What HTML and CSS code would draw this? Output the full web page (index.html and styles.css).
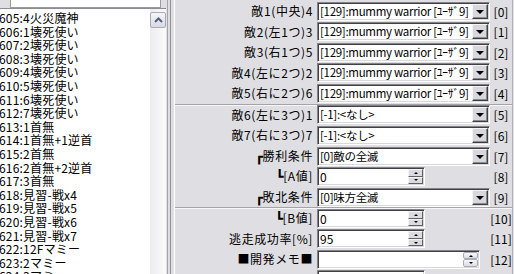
FILE: index.html
```html
<!DOCTYPE html>
<html lang="ja">
<head>
  <meta charset="UTF-8">
  <title>敵グループ編集</title>
  <link rel="stylesheet" href="styles.css">
</head>
<body>
<div class="window">
  <div class="left">
    <div class="search"><div class="search-box"></div></div>
    <div class="listbox">
      <ul class="items">
        <li>605:4火災魔神</li>
        <li>606:1壊死使い</li>
        <li>607:2壊死使い</li>
        <li>608:3壊死使い</li>
        <li>609:4壊死使い</li>
        <li>610:5壊死使い</li>
        <li>611:6壊死使い</li>
        <li>612:7壊死使い</li>
        <li>613:1首無</li>
        <li>614:1首無+1逆首</li>
        <li>615:2首無</li>
        <li>616:2首無+2逆首</li>
        <li>617:3首無</li>
        <li>618:見習-戦x4</li>
        <li>619:見習-戦x5</li>
        <li>620:見習-戦x6</li>
        <li>621:見習-戦x7</li>
        <li>622:12Fマミー</li>
        <li>623:2マミー</li>
        <li>624:3マミー</li>
      </ul>
      <div class="scrollbar">
        <div class="sb-up">
          <svg width="9" height="6" viewBox="0 0 9 6"><polyline points="1,5 4.5,1.5 8,5" fill="none" stroke="#4d6185" stroke-width="2"/></svg>
        </div>
      </div>
    </div>
  </div>

  <div class="splitter"></div>

  <div class="props">
    <!-- 敵1〜敵5 -->
    <div class="group">
      <div class="row"><label>敵1(中央)4</label><div class="combo"><span class="val">[129]:mummy warrior [ﾕｰｻﾞ9]</span><span class="drop"></span></div><span class="idx">[0]</span></div>
      <div class="row"><label>敵2(左1つ)3</label><div class="combo"><span class="val">[129]:mummy warrior [ﾕｰｻﾞ9]</span><span class="drop"></span></div><span class="idx">[1]</span></div>
      <div class="row"><label>敵3(右1つ)5</label><div class="combo"><span class="val">[129]:mummy warrior [ﾕｰｻﾞ9]</span><span class="drop"></span></div><span class="idx">[2]</span></div>
      <div class="row"><label>敵4(左に2つ)2</label><div class="combo"><span class="val">[129]:mummy warrior [ﾕｰｻﾞ9]</span><span class="drop"></span></div><span class="idx">[3]</span></div>
      <div class="row"><label>敵5(右に2つ)6</label><div class="combo"><span class="val">[129]:mummy warrior [ﾕｰｻﾞ9]</span><span class="drop"></span></div><span class="idx">[4]</span></div>
    </div>

    <!-- 敵6〜勝敗条件 -->
    <div class="group sep">
      <div class="row"><label>敵6(左に3つ)1</label><div class="combo"><span class="val">[-1]:&lt;なし&gt;</span><span class="drop"></span></div><span class="idx">[5]</span></div>
      <div class="row"><label>敵7(右に3つ)7</label><div class="combo"><span class="val">[-1]:&lt;なし&gt;</span><span class="drop"></span></div><span class="idx">[6]</span></div>
      <div class="row"><label><span class="bx">┏</span>勝利条件</label><div class="combo"><span class="val">[0]敵の全滅</span><span class="drop"></span></div><span class="idx">[7]</span></div>
      <div class="row"><label><span class="bx">┗</span>[A値]</label><div class="spin"><span class="val">0</span><span class="spin-btns"><i class="up"></i><i class="down"></i></span></div><span class="idx">[8]</span></div>
      <div class="row"><label><span class="bx">┏</span>敗北条件</label><div class="combo"><span class="val">[0]味方全滅</span><span class="drop"></span></div><span class="idx">[9]</span></div>
    </div>

    <!-- その他 -->
    <div class="group sep">
      <div class="row"><label><span class="bx">┗</span>[B値]</label><div class="spin"><span class="val">0</span><span class="spin-btns"><i class="up"></i><i class="down"></i></span></div><span class="idx">[10]</span></div>
      <div class="row"><label>逃走成功率[%]</label><div class="spin"><span class="val">95</span><span class="spin-btns"><i class="up"></i><i class="down"></i></span></div><span class="idx">[11]</span></div>
      <div class="row"><label>■開発メモ■</label><div class="spin memo"><span class="val"></span><span class="spin-btns"><i class="up"></i><i class="down"></i></span></div><span class="idx">[12]</span></div>
      <div class="row"><label></label><div class="spin"><span class="val"></span></div><span class="idx"></span></div>
    </div>
  </div>
</div>
</body>
</html>
```

FILE: styles.css
```css
* { box-sizing: border-box; }
body {
  margin: 0;
  font-family: "Noto Sans CJK JP", sans-serif;
  font-size: 12px;
  color: #000;
  background: #dfdfe3;
  overflow: hidden;
}
.window {
  display: flex;
  width: 514px;
  height: 274px;
  overflow: hidden;
}

/* left list */
.left {
  width: 166px;
  flex: none;
  display: flex;
  flex-direction: column;
}
.search { height: 16px; padding: 0 5px 0 10px; }
.search-box {
  height: 21px;
  margin-top: -13px;
  background: #fff;
  border: 1px solid #9a9aa0;
  box-shadow: 0 1px #fff;
}
.listbox {
  flex: 1;
  display: flex;
  background: #fff;
  border-top: 1px solid #8c8c92;
}
.items {
  flex: 1;
  list-style: none;
  margin: 0 0 0 -1px;
  padding: 2px 0 0;
  overflow: hidden;
}
.items li { line-height: 13.6px; height: 13.6px; white-space: nowrap; letter-spacing: 0.2px; }
.scrollbar {
  width: 16px;
  flex: none;
  padding-top: 3px;
  background: linear-gradient(to right, #ececf0, #fbfbfc);
}
.sb-up {
  width: 16px;
  height: 16px;
  display: flex;
  align-items: center;
  justify-content: center;
  background: linear-gradient(#f6f6f8, #d9dae2);
  border: 1px solid #a9abb8;
  border-radius: 2px;
}

.splitter {
  width: 9px;
  flex: none;
  background: #dfdfe3;
  border-right: 1px solid #fff;
  box-shadow: inset -3px 0 #dfdfe3, inset -4px 0 #8e8e94, inset -6px 0 #dfdfe3, inset -7px 0 #a6a6aa;
}

/* property grid */
.props {
  flex: 1;
  border-right: 1px solid #b4b4b8;
  margin-right: 1px;
}
.group { padding-top: 1px; }
.group.sep {
  padding-top: 0;
  border-top: 1px solid #a4a4a8;
  box-shadow: inset 0 1px #f6f6f8;
}
.row {
  display: grid;
  grid-template-columns: 142px 173px 22px;
  align-items: center;
  height: 20.5px;
}
.row label {
  text-align: right;
  padding-right: 4px;
  line-height: 20px;
  white-space: nowrap;
  letter-spacing: 0.6px;
}
.bx {
  font-family: "DejaVu Sans Mono", monospace;
  font-weight: bold;
  font-size: 13px;
  margin-right: -1px;
}
.idx { text-align: center; white-space: nowrap; }

.combo, .spin {
  height: 19px;
  display: flex;
  padding: 1px;
  background: #fff;
  border: 1px solid;
  border-color: #828288 #fff #fff #828288;
  box-shadow: inset 1px 1px #404044, inset -1px -1px #d8d8dc;
}
.val {
  flex: 1;
  padding-left: 1px;
  line-height: 15px;
  white-space: nowrap;
  overflow: hidden;
}
.combo .val { font-size: 11.5px; letter-spacing: -0.3px; }
.drop {
  width: 16px;
  flex: none;
  display: flex;
  align-items: center;
  justify-content: center;
  background: #d8d8dc;
  border: 1px solid;
  border-color: #f4f4f6 #404044 #404044 #f4f4f6;
  box-shadow: inset -1px -1px #8a8a90;
}
.drop::after {
  content: "";
  border-left: 4px solid transparent;
  border-right: 4px solid transparent;
  border-top: 4px solid #000;
  margin-top: 1px;
}

.spin { width: 108px; }
.spin.memo { width: 163px; }
.spin-btns {
  width: 15px;
  flex: none;
  display: flex;
  flex-direction: column;
}
.spin-btns i {
  flex: 1;
  display: flex;
  align-items: center;
  justify-content: center;
  background: #dcdce0;
  border: 1px solid;
  border-color: #f4f4f6 #606066 #606066 #f4f4f6;
}
.spin-btns i::after {
  content: "";
  border-left: 2px solid transparent;
  border-right: 2px solid transparent;
}
.spin-btns .up::after { border-bottom: 2px solid #000; }
.spin-btns .down::after { border-top: 2px solid #000; }
.memo .spin-btns i {
  background: linear-gradient(#f8f8fa, #dcdde4);
  border: 1px solid #a9abb8;
  border-radius: 2px;
}
```
